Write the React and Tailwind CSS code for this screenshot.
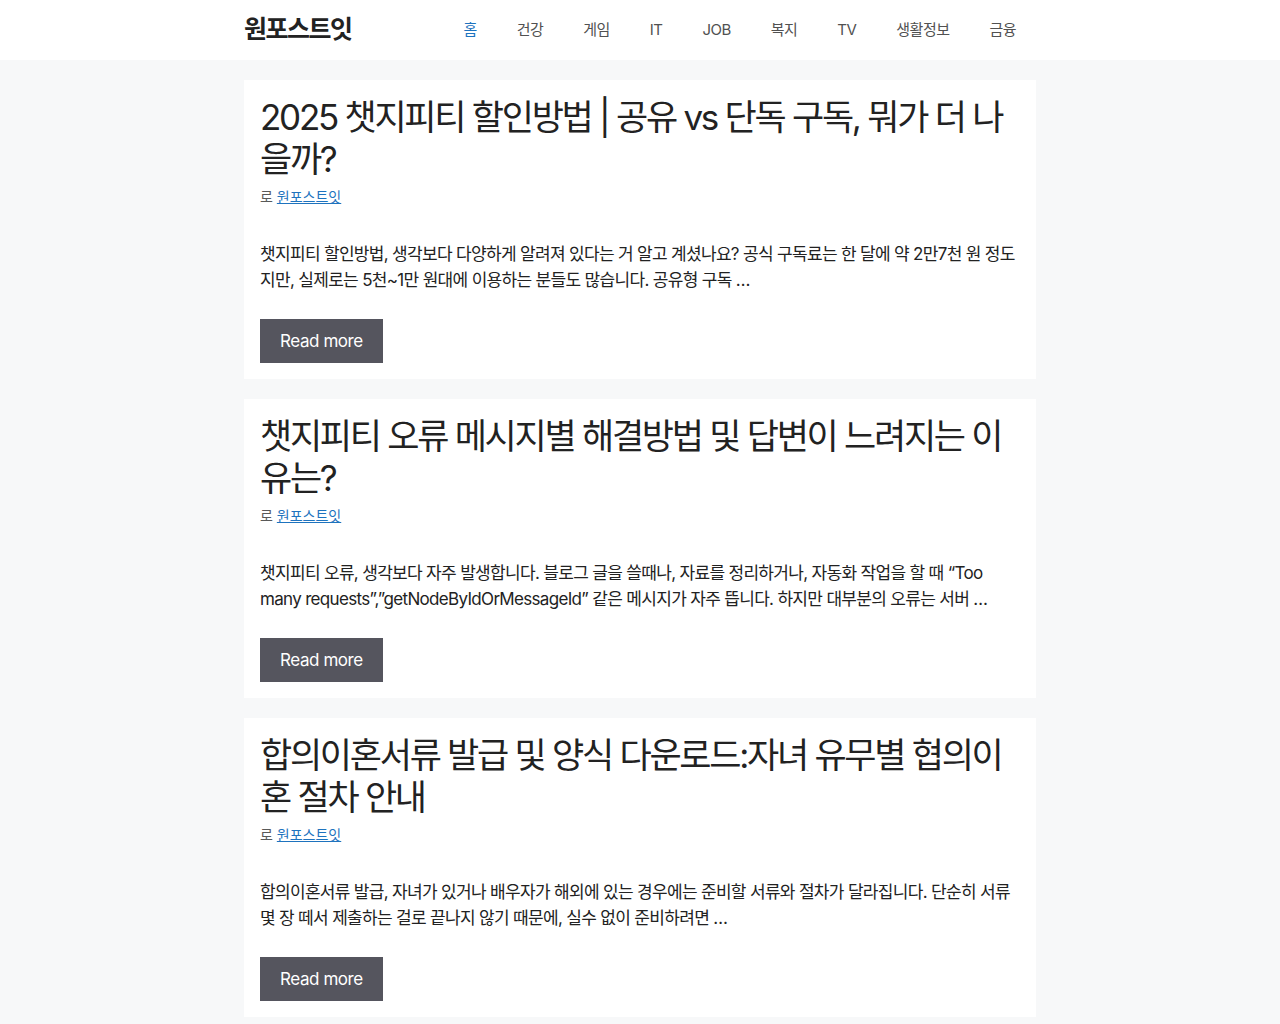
const navItems = ['홈', '건강', '게임', 'IT', 'JOB', '복지', 'TV', '생활정보', '금융'];

const posts = [
  {
    title: '2025 챗지피티 할인방법 | 공유 vs 단독 구독, 뭐가 더 나을까?',
    excerpt:
      '챗지피티 할인방법, 생각보다 다양하게 알려져 있다는 거 알고 계셨나요? 공식 구독료는 한 달에 약 2만7천 원 정도지만, 실제로는 5천~1만 원대에 이용하는 분들도 많습니다. 공유형 구독 …',
  },
  {
    title: '챗지피티 오류 메시지별 해결방법 및 답변이 느려지는 이유는?',
    excerpt:
      '챗지피티 오류, 생각보다 자주 발생합니다. 블로그 글을 쓸때나, 자료를 정리하거나, 자동화 작업을 할 때 “Too many requests”,”getNodeByIdOrMessageId” 같은 메시지가 자주 뜹니다. 하지만 대부분의 오류는 서버 …',
  },
  {
    title: '합의이혼서류 발급 및 양식 다운로드:자녀 유무별 협의이혼 절차 안내',
    excerpt:
      '합의이혼서류 발급, 자녀가 있거나 배우자가 해외에 있는 경우에는 준비할 서류와 절차가 달라집니다. 단순히 서류 몇 장 떼서 제출하는 걸로 끝나지 않기 때문에, 실수 없이 준비하려면 …',
  },
];

const PostCard = ({ post }) => {
  return (
    <article className="bg-white p-4">
      <h2 className="text-[35px] leading-[42px] text-[#222222] tracking-[-0.065em]">{post.title}</h2>
      <div className="mt-[7px] text-[14px] leading-[20px] text-[#595959]">
        로 <a href="#" className="text-[#1e73be] underline">원포스트잇</a>
      </div>
      <p className="mt-[34px] text-[17px] leading-[26px] text-[#222222] tracking-[-0.04em]">{post.excerpt}</p>
      <a href="#" className="mt-[26px] inline-block bg-[#55555e] px-5 py-[10px] text-[17px] leading-[24px] text-white tracking-[-0.025em]">
        Read more
      </a>
    </article>
  );
};

export default function App() {
  return (
    <div className="min-h-[1024px] bg-[#f7f8f9] font-['Inter','Noto_Sans_CJK_KR',sans-serif]">
      {/* Header */}
      <header className="bg-white">
        <div className="mx-auto flex h-[60px] w-[792px] items-center justify-between">
          <div className="text-[25px] font-bold text-[#222222] tracking-[-0.06em]">원포스트잇</div>
          <nav className="flex">
            {navItems.map((item, i) => (
              <a
                key={item}
                href="#"
                className={`px-5 text-[15px] leading-[60px] tracking-[-0.035em] ${i === 0 ? 'text-[#1e73be]' : 'text-[#515151]'}`}
              >
                {item}
              </a>
            ))}
          </nav>
        </div>
      </header>

      {/* Posts */}
      <main className="mx-auto flex w-[792px] flex-col gap-5 pt-5">
        {posts.map((post) => (
          <PostCard key={post.title} post={post} />
        ))}
      </main>
    </div>
  );
}
